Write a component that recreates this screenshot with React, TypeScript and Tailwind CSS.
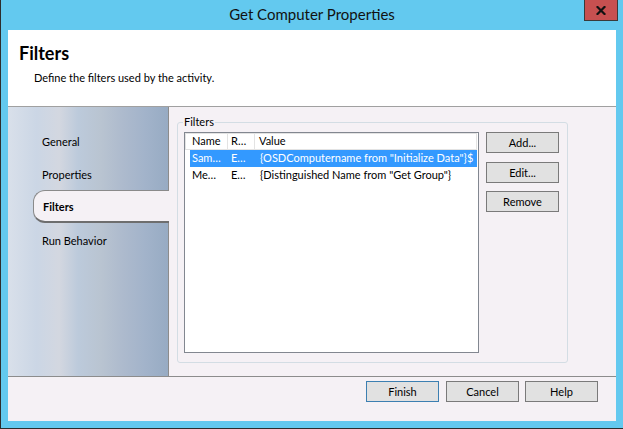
import React from "react";

function Btn({ label, primary, className = "" }: { label: string; primary?: boolean; className?: string }) {
  return (
    <div
      className={
        "w-[73px] h-[21px] shrink-0 flex items-center justify-center bg-[#e1e1e1] border text-[11px] leading-none " +
        (primary ? "border-[#3c7fb1] " : "border-[#7a7a7a] ") +
        className
      }
    >
      {label}
    </div>
  );
}

export default function App() {
  return (
    <div className="w-[623px] h-[429px] bg-[#63c9ef] border-l border-b border-[#2d2d2d] flex flex-col font-['Lato',sans-serif] text-[11px] text-black relative overflow-hidden">
      <div className="h-[30px] shrink-0 flex items-center justify-center text-[15px] text-[#111] pb-[1px]">
        Get Computer Properties
      </div>
      <div className="absolute right-[5px] top-0 w-[34px] h-[21px] bg-[#c75050] border border-t-0 border-[#3a3a3a] flex items-center justify-center">
        <svg width="10" height="9" viewBox="0 0 10 9">
          <path d="M1.5 1 L8.5 8 M8.5 1 L1.5 8" stroke="#111" strokeWidth="2.2" strokeLinecap="square" />
        </svg>
      </div>

      <div className="ml-[7px] mr-[7px] mb-[7px] flex-1 flex flex-col bg-[#f5f1f5]">
        {/* header */}
        <div className="h-[77px] shrink-0 bg-white border-b border-[#a0a0a0] pl-[11px] pt-[13px]">
          <div className="text-[18px] font-bold leading-[20px]">Filters</div>
          <div className="pl-[15px] mt-[7px] text-[11px] leading-[15px]">Define the filters used by the activity.</div>
        </div>

        {/* middle */}
        <div className="h-[270px] shrink-0 flex border-b border-[#8c8c8c]">
          <div className="w-[161px] shrink-0 border-r border-[#8c8c8c] bg-[linear-gradient(to_right,#d9e0ea,#cbd6e5_18%,#d3d7e0_32%,#bccadb_44%,#b9c4d1_58%,#adbacd_72%,#a2b3ca_86%,#97abc3)] flex flex-col pt-[17px]">
            <div className="h-[33px] flex items-center pl-[34px] pt-[3px]">General</div>
            <div className="h-[33px] flex items-center pl-[34px] pt-[3px]">Properties</div>
            <div className="h-[33px] flex items-center ml-[25px] mr-[-1px] pl-[9px] pt-[2px] bg-[#f5f1f5] border border-r-0 border-[#8a8a8a] border-b-2 border-b-[#6e6e6e] rounded-l-[12px] font-bold relative z-10">
              Filters
            </div>
            <div className="h-[33px] flex items-center pl-[34px] pt-[3px]">Run Behavior</div>
          </div>

          <div className="flex-1 pl-[8px] pt-[8px]">
            <fieldset className="w-[391px] h-[248px] border border-[#d3dde4] rounded-[3px] pl-[5px] pt-0">
              <legend className="px-[1px] leading-[14px] text-[11px]">Filters</legend>
              <div className="flex pt-[3px] pl-[1px]">
                <div className="w-[295px] h-[221px] shrink-0 bg-white border border-[#828790] flex flex-col">
                  <div className="flex h-[17px] border border-[#e3e3e3] mr-[1px]">
                    <div className="w-[42px] shrink-0 pl-[6px] flex items-center border-r border-[#e3e3e3]">Name</div>
                    <div className="w-[27px] shrink-0 pl-[3px] flex items-center border-r border-[#e3e3e3]">R…</div>
                    <div className="flex-1 pl-[4px] flex items-center">Value</div>
                  </div>
                  <div className="flex h-[17px] ml-[5px] w-[287px] bg-[#3399ff] text-white items-center">
                    <div className="w-[41px] shrink-0 pl-[2px]">Sam…</div>
                    <div className="w-[28px] shrink-0">E…</div>
                    <div className="flex-1 min-w-0 pl-[1px] whitespace-nowrap overflow-hidden">{'{OSDComputername from "Initialize Data"}$'}</div>
                  </div>
                  <div className="flex h-[17px] ml-[5px] w-[287px] items-center">
                    <div className="w-[41px] shrink-0 pl-[2px]">Me…</div>
                    <div className="w-[28px] shrink-0">E…</div>
                    <div className="flex-1 min-w-0 pl-[1px] whitespace-nowrap overflow-hidden">{'{Distinguished Name from "Get Group"}'}</div>
                  </div>
                </div>
                <div className="ml-[7px] flex flex-col">
                  <Btn label="Add..." />
                  <Btn label="Edit..." className="mt-[9px]" />
                  <Btn label="Remove" className="mt-[8px]" />
                </div>
              </div>
            </fieldset>
          </div>
        </div>

        {/* footer */}
        <div className="flex-1 flex justify-end items-start pt-[4px] pr-[18px]">
          <Btn label="Finish" primary />
          <Btn label="Cancel" className="ml-[7px]" />
          <Btn label="Help" className="ml-[6px]" />
        </div>
      </div>
    </div>
  );
}
